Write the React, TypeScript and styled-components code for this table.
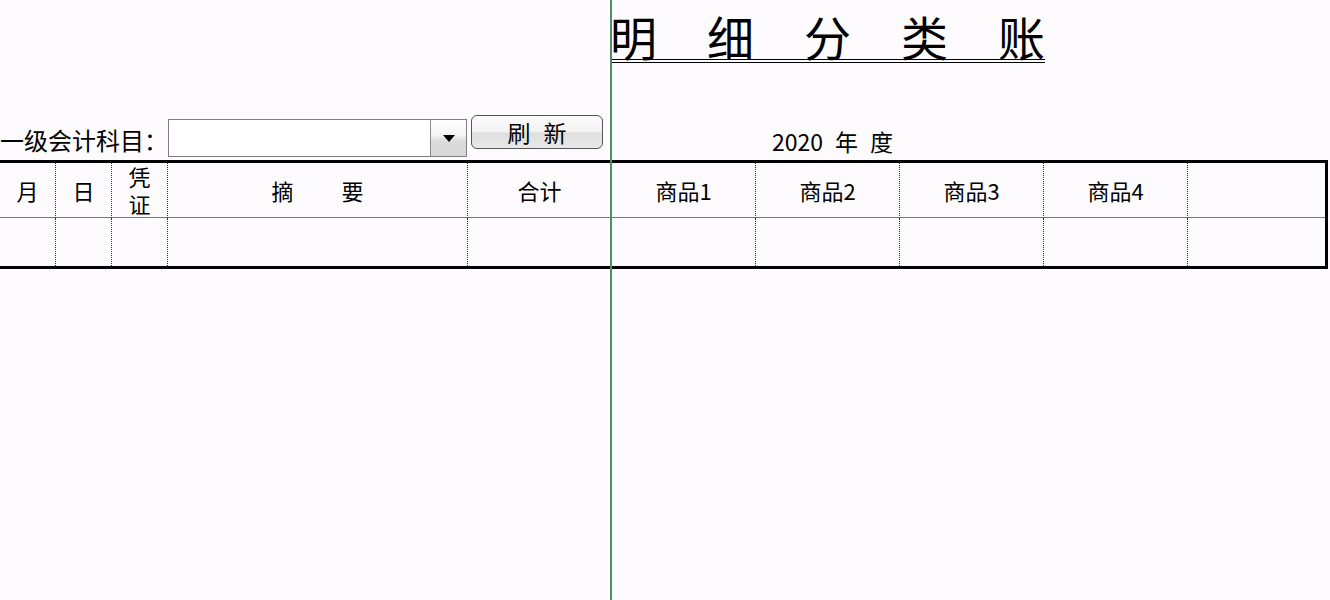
import React from "react";
import styled, { createGlobalStyle } from "styled-components";

const GlobalStyle = createGlobalStyle`
  html, body { margin: 0; padding: 0; background: #fdfbfd; }
  body { font-family: "Noto Sans CJK SC", "Noto Sans", sans-serif; color: #000; }
  * { box-sizing: border-box; }
`;

const Page = styled.div`
  position: relative;
  width: 1330px;
  height: 600px;
  overflow: hidden;
  background: #fdfbfd;
  font-weight: 400;
`;

const FreezeLine = styled.div`
  position: absolute;
  left: 610px;
  top: 0;
  width: 2px;
  height: 600px;
  background: #4f8c68;
  z-index: 2;
`;

const Header = styled.div`
  display: grid;
  grid-template-columns: 611px 1fr;
  height: 160px;
`;

const Toolbar = styled.div`
  display: flex;
  align-items: flex-start;
  padding-top: 115px;
`;

const Label = styled.span`
  margin-top: 11px;
  font-size: 24px;
  line-height: 28px;
  white-space: nowrap;
`;

const Combo = styled.div`
  margin-top: 4px;
  width: 299px;
  height: 38px;
  border: 1px solid #7f7f7f;
  background: #fff;
  display: flex;
  justify-content: flex-end;
`;

const ComboButton = styled.div`
  width: 36px;
  height: 100%;
  border-left: 1px solid #8c8c8c;
  background: linear-gradient(#ffffff 0%, #f4f4f4 42%, #dcdcdc 58%, #d6d6d6 100%);
  display: flex;
  align-items: center;
  justify-content: center;
`;

const RefreshButton = styled.button`
  margin-left: 4px;
  width: 132px;
  height: 34px;
  border: 1px solid #555;
  border-radius: 6px;
  background: linear-gradient(#fbfbfb 0%, #f2f2f2 48%, #dedede 54%, #e9e9e9 100%);
  display: flex;
  align-items: center;
  justify-content: center;
  gap: 13px;
  padding: 0;
  color: #000;
  font-family: "Noto Sans CJK SC", sans-serif;
  font-size: 23px;
  font-weight: 400;
  line-height: 1;
`;

const TitlePane = styled.div`
  display: flex;
  flex-direction: column;
  align-items: flex-start;
`;

const Title = styled.h1`
  display: flex;
  gap: 50px;
  margin: 13px 0 0 -1px;
  font-size: 47px;
  line-height: 46px;
  font-weight: 400;
  border-bottom: 4px double #000;
`;

const Year = styled.div`
  display: flex;
  gap: 12px;
  margin: 67px 0 0 161px;
  font-size: 23px;
  line-height: 22px;
`;

const Table = styled.div`
  display: grid;
  grid-template-columns: 56px 56px 56px 300px repeat(5, 144px) 1fr;
  grid-template-rows: 55px 48px;
  width: 1328px;
  border-top: 3px solid #000;
  border-bottom: 3px solid #000;
  border-right: 3px solid #000;
`;

const HeadCell = styled.div<{ $last?: boolean }>`
  display: flex;
  align-items: center;
  justify-content: center;
  gap: 48px;
  border-right: ${(p) => (p.$last ? "none" : "1px dotted #2a2a3a")};
  border-bottom: 1px solid #4f8c68;
  font-size: 22px;
  line-height: 22px;
  overflow: hidden;
  white-space: nowrap;
`;

const StackedHead = styled(HeadCell)`
  flex-direction: column;
  justify-content: flex-start;
  gap: 0;
  line-height: 27px;
`;

const BodyCell = styled.div<{ $last?: boolean }>`
  border-right: ${(p) => (p.$last ? "none" : "1px dotted #2a2a3a")};
`;

const products = ["商品1", "商品2", "商品3", "商品4"];

export default function App() {
  return (
    <Page>
      <GlobalStyle />
      <Header>
        <Toolbar>
          <Label>一级会计科目：</Label>
          <Combo>
            <ComboButton>
              <svg width="12" height="7" viewBox="0 0 12 7">
                <polygon points="0,0 12,0 6,7" fill="#000" />
              </svg>
            </ComboButton>
          </Combo>
          <RefreshButton>
            <span>刷</span>
            <span>新</span>
          </RefreshButton>
        </Toolbar>
        <TitlePane>
          <Title>
            <span>明</span>
            <span>细</span>
            <span>分</span>
            <span>类</span>
            <span>账</span>
          </Title>
          <Year>
            <span>2020</span>
            <span>年</span>
            <span>度</span>
          </Year>
        </TitlePane>
      </Header>
      <Table>
        <HeadCell>月</HeadCell>
        <HeadCell>日</HeadCell>
        <StackedHead>
          <span>凭</span>
          <span>证</span>
        </StackedHead>
        <HeadCell>
          <span>摘</span>
          <span>要</span>
        </HeadCell>
        <HeadCell>合计</HeadCell>
        {products.map((p) => (
          <HeadCell key={p}>{p}</HeadCell>
        ))}
        <HeadCell $last />
        {Array.from({ length: 9 }).map((_, i) => (
          <BodyCell key={i} />
        ))}
        <BodyCell $last />
      </Table>
      <FreezeLine />
    </Page>
  );
}
